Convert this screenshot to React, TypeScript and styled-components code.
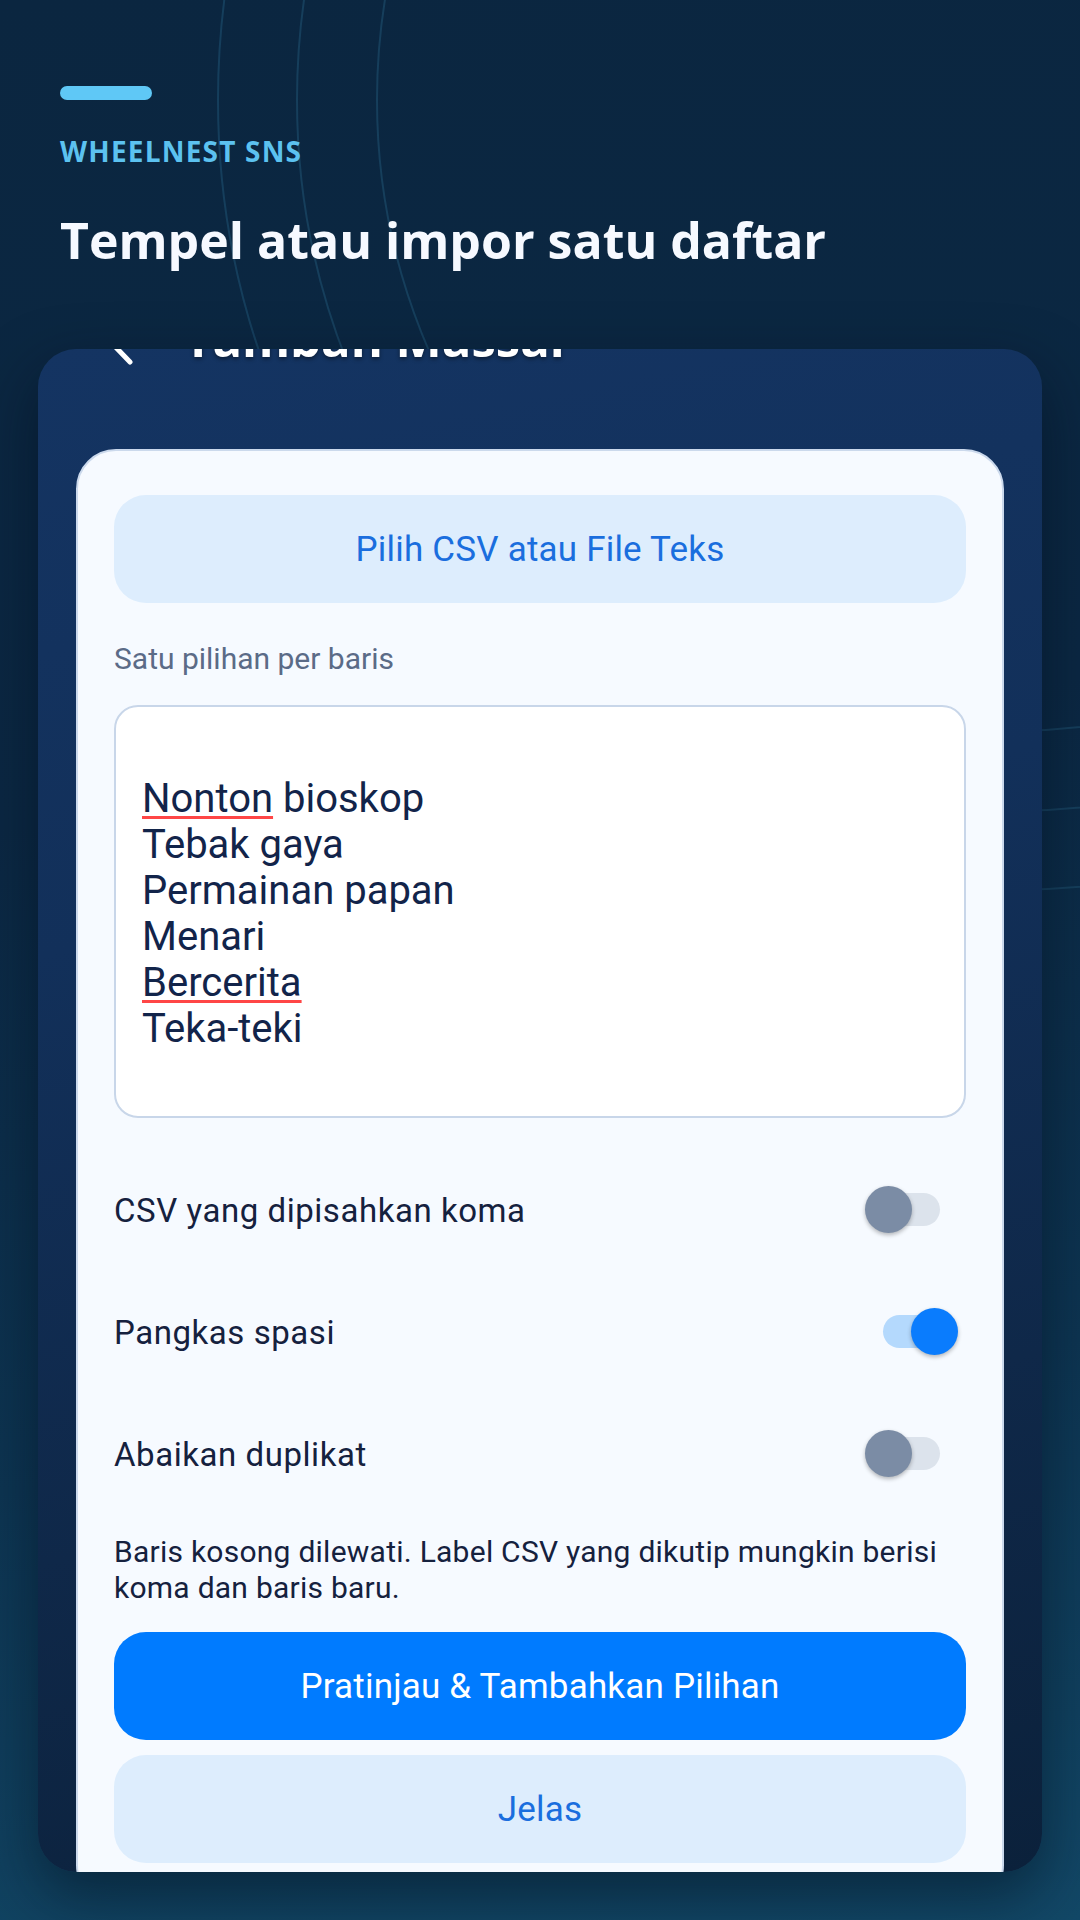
import React from "react";
import styled, { createGlobalStyle } from "styled-components";

const Global = createGlobalStyle`
  html, body { margin: 0; padding: 0; }
  body { background: #0b2640; }
  * { box-sizing: border-box; }
`;

const Page = styled.div`
  position: relative;
  width: 1080px;
  height: 1920px;
  overflow: hidden;
  padding: 86px 38px 48px;
  display: flex;
  flex-direction: column;
  background: linear-gradient(172deg, #0b2640 0%, #0b2843 40%, #0d3552 72%, #10415f 90%, #124867 100%);
`;

const Rings = styled.svg`
  position: absolute;
  left: 0;
  top: 0;
  width: 1080px;
  height: 1920px;
  pointer-events: none;
`;

const Hero = styled.header`
  position: relative;
  padding-left: 22px;
  display: flex;
  flex-direction: column;
  align-items: flex-start;
`;

const Accent = styled.div`
  width: 92px;
  height: 14px;
  border-radius: 7px;
  background: #5fc8f6;
`;

const Eyebrow = styled.div`
  margin-top: 34px;
  font-family: "Open Sans", "Noto Sans", sans-serif;
  font-weight: 700;
  font-size: 28px;
  line-height: 34px;
  letter-spacing: 1.2px;
  color: #5cc2f0;
`;

const Title = styled.h1`
  margin: 41px 0 0;
  font-family: "Open Sans", "Noto Sans", sans-serif;
  font-weight: 700;
  font-size: 50px;
  line-height: 62px;
  color: #f6f9ff;
`;

const Card = styled.section`
  position: relative;
  margin-top: 78px;
  height: 1523px;
  border-radius: 38px;
  overflow: hidden;
  padding: 0 38px;
  display: flex;
  flex-direction: column;
  background: linear-gradient(168deg, #143462 0%, #12305a 35%, #0f2849 70%, #0b213b 100%);
  box-shadow: 0 24px 60px rgba(2, 12, 26, 0.5);
`;

const CardHeader = styled.div`
  flex-shrink: 0;
  height: 72px;
  margin-top: -59px;
  padding-left: 20px;
  display: flex;
  align-items: flex-end;
  gap: 48px;
`;

const BackIcon = styled.svg`
  width: 40px;
  height: 72px;
  overflow: visible;
  flex-shrink: 0;
`;

const CardTitle = styled.div`
  font-family: "Open Sans", "Noto Sans", sans-serif;
  font-weight: 700;
  font-size: 49px;
  line-height: 48px;
  color: #ffffff;
  text-shadow: 0 2px 4px rgba(0, 0, 0, 0.45);
`;

const Panel = styled.div`
  flex-shrink: 0;
  margin-top: 87px;
  background: #f6faff;
  border: 2px solid #cbd9ec;
  border-radius: 40px;
  padding: 44px 36px 40px;
  display: flex;
  flex-direction: column;
`;

const SoftButton = styled.button<{ $primary?: boolean }>`
  height: 108px;
  width: 100%;
  border: none;
  border-radius: 32px;
  background: ${(p) => (p.$primary ? "#007bff" : "#ddedfd")};
  color: ${(p) => (p.$primary ? "#ffffff" : "#1a6ede")};
  font-family: Roboto, "Noto Sans", sans-serif;
  font-size: 35px;
  font-weight: 400;
  letter-spacing: 0.2px;
  display: flex;
  align-items: center;
  justify-content: center;
  cursor: pointer;
`;

const FieldLabel = styled.div`
  margin: 36px 0 26px;
  font-family: Roboto, "Noto Sans", sans-serif;
  font-size: 30px;
  line-height: 40px;
  color: #5b6b87;
`;

const TextBox = styled.div`
  height: 413px;
  border: 2px solid #c8d6e9;
  border-radius: 24px;
  background: #ffffff;
  padding: 69px 26px 0;
  font-family: Roboto, "Noto Sans", sans-serif;
  font-size: 40px;
  line-height: 46px;
  color: #12244a;
`;

const Line = styled.div`
  white-space: pre;
`;

const Misspelled = styled.span`
  text-decoration: underline;
  text-decoration-color: #ff4646;
  text-decoration-thickness: 3px;
  text-underline-offset: 4px;
  text-decoration-skip-ink: none;
`;

const Options = styled.div`
  margin-top: 31px;
  display: flex;
  flex-direction: column;
`;

const OptionRow = styled.div`
  height: 122px;
  display: flex;
  align-items: center;
  justify-content: space-between;
  padding-right: 8px;
`;

const OptionLabel = styled.span`
  font-family: Roboto, "Noto Sans", sans-serif;
  font-size: 33px;
  letter-spacing: 0.55px;
  color: #15213e;
`;

const Switch = styled.div`
  position: relative;
  width: 93px;
  height: 48px;
  flex-shrink: 0;
`;

const Track = styled.div<{ $on: boolean }>`
  position: absolute;
  left: 18px;
  top: 7px;
  width: 57px;
  height: 33px;
  border-radius: 17px;
  background: ${(p) => (p.$on ? "#b4d9fd" : "#dce3ec")};
`;

const Thumb = styled.div<{ $on: boolean }>`
  position: absolute;
  top: 0;
  left: ${(p) => (p.$on ? "46px" : "0px")};
  width: 47px;
  height: 47px;
  border-radius: 50%;
  background: ${(p) => (p.$on ? "#0a7cfd" : "#7b8ca5")};
  box-shadow: 0 2px 4px rgba(0, 0, 0, 0.28);
`;

const Helper = styled.p`
  margin: 19px 0 0;
  font-family: Roboto, "Noto Sans", sans-serif;
  font-size: 30px;
  line-height: 36px;
  letter-spacing: 0.25px;
  color: #15213e;
`;

const Actions = styled.div`
  margin-top: 26px;
  display: flex;
  flex-direction: column;
  gap: 15px;
`;

const Toggle = ({ on }: { on: boolean }) => (
  <Switch>
    <Track $on={on} />
    <Thumb $on={on} />
  </Switch>
);

export default function App() {
  const options = [
    { label: "CSV yang dipisahkan koma", on: false },
    { label: "Pangkas spasi", on: true },
    { label: "Abaikan duplikat", on: false },
  ];
  return (
    <>
      <Global />
      <Page>
        <Rings viewBox="0 0 1080 1920">
          <g fill="none" stroke="#1a4765" strokeWidth="2" opacity="0.75">
            <circle cx="1008" cy="100" r="790" />
            <circle cx="1008" cy="100" r="711" />
            <circle cx="1008" cy="100" r="631" />
          </g>
        </Rings>
        <Hero>
          <Accent />
          <Eyebrow>WHEELNEST SNS</Eyebrow>
          <Title>Tempel atau impor satu daftar</Title>
        </Hero>
        <Card>
          <CardHeader>
            <BackIcon viewBox="0 0 40 72">
              <path
                d="M34 18 L8 45 L34 72"
                fill="none"
                stroke="#ffffff"
                strokeWidth="5"
                strokeLinecap="round"
                strokeLinejoin="round"
              />
            </BackIcon>
            <CardTitle>Tambah Massal</CardTitle>
          </CardHeader>
          <Panel>
            <SoftButton>Pilih CSV atau File Teks</SoftButton>
            <FieldLabel>Satu pilihan per baris</FieldLabel>
            <TextBox>
              <Line>
                <Misspelled>Nonton</Misspelled> bioskop
              </Line>
              <Line>Tebak gaya</Line>
              <Line>Permainan papan</Line>
              <Line>Menari</Line>
              <Line>
                <Misspelled>Bercerita</Misspelled>
              </Line>
              <Line>Teka-teki</Line>
            </TextBox>
            <Options>
              {options.map((o) => (
                <OptionRow key={o.label}>
                  <OptionLabel>{o.label}</OptionLabel>
                  <Toggle on={o.on} />
                </OptionRow>
              ))}
            </Options>
            <Helper>
              Baris kosong dilewati. Label CSV yang dikutip mungkin berisi koma dan baris baru.
            </Helper>
            <Actions>
              <SoftButton $primary>Pratinjau &amp; Tambahkan Pilihan</SoftButton>
              <SoftButton>Jelas</SoftButton>
            </Actions>
          </Panel>
        </Card>
      </Page>
    </>
  );
}
